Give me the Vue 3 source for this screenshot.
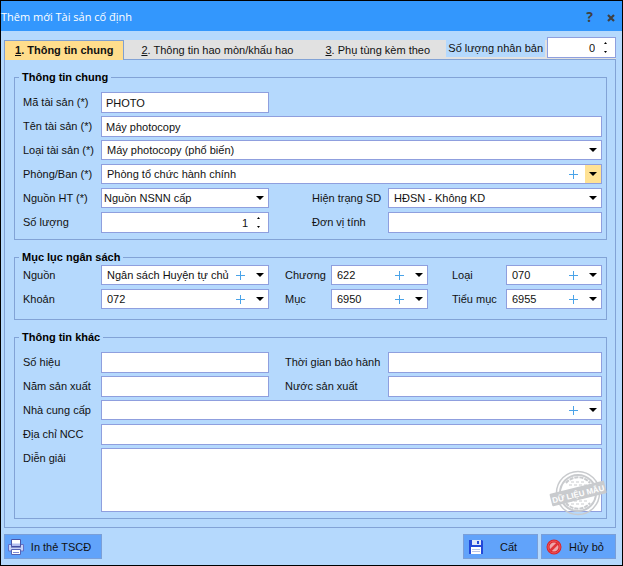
<template>
  <main class="window">
    <header class="titlebar">
      <h1>Thêm mới Tài sản cố định</h1>
      <button type="button" class="title-btn" aria-label="Trợ giúp">?</button>
      <button type="button" class="title-btn" aria-label="Đóng">
        <svg width="8" height="8" viewBox="0 0 8 8"><path d="M1 1L7 7M7 1L1 7" stroke="#404040" stroke-width="2.2" /></svg>
      </button>
    </header>

    <form class="body" @submit.prevent>
      <div class="tabbar">
        <button v-for="(tab, i) in tabs" :key="tab" type="button"
                class="tab" :class="{ active: i === activeTab }"
                @click="activeTab = i"><u>{{ i + 1 }}</u>. {{ tab }}</button>
        <label class="copies-label" for="copies">Số lượng nhân bản</label>
        <div class="box spin copies">
          <input id="copies" v-model="form.copies" type="number">
          <svg class="spin-arrows" width="18" height="13" viewBox="0 0 18 13"><path d="M7 3h3l-1.5-2zM7 10h3l-1.5 2z" /></svg>
        </div>
      </div>

      <div class="pane">
        <fieldset>
          <legend>Thông tin chung</legend>
          <div class="grid">
            <label for="code">Mã tài sản (*)</label>
            <input id="code" v-model="form.code" class="box" type="text">

            <label class="first" for="name">Tên tài sản (*)</label>
            <input id="name" v-model="form.name" class="box wide" type="text">

            <label for="type">Loại tài sản (*)</label>
            <div class="box combo wide">
              <select id="type"><option>Máy photocopy (phổ biến)</option></select>
              <span class="arrow"></span>
            </div>

            <label for="dept">Phòng/Ban (*)</label>
            <div class="box combo wide">
              <select id="dept"><option>Phòng tổ chức hành chính</option></select>
              <button type="button" class="plus" aria-label="Thêm"></button>
              <span class="arrow hot"></span>
            </div>

            <label for="source">Nguồn HT (*)</label>
            <div class="box combo plain">
              <select id="source"><option>Nguồn NSNN cấp</option></select>
              <span class="arrow"></span>
            </div>
            <label class="far" for="status">Hiện trạng SD</label>
            <div class="box combo">
              <select id="status"><option>HĐSN - Không KD</option></select>
              <span class="arrow"></span>
            </div>

            <label for="qty">Số lượng</label>
            <div class="box spin">
              <input id="qty" v-model="form.qty" type="number">
              <svg class="spin-arrows" width="18" height="13" viewBox="0 0 18 13"><path d="M7 3h3l-1.5-2zM7 10h3l-1.5 2z" /></svg>
            </div>
            <label class="far" for="unit">Đơn vị tính</label>
            <input id="unit" class="box" type="text">
          </div>
        </fieldset>

        <fieldset class="budget">
          <legend>Mục lục ngân sách</legend>
          <div class="grid six">
            <template v-for="(f, i) in budget" :key="f.id">
              <label :for="f.id" :class="['', 'near', 'mid'][i % 3]">{{ f.label }}</label>
              <div class="box combo">
                <select :id="f.id"><option>{{ f.value }}</option></select>
                <button type="button" class="plus" aria-label="Thêm"></button>
                <span class="arrow"></span>
              </div>
            </template>
          </div>
        </fieldset>

        <fieldset>
          <legend>Thông tin khác</legend>
          <div class="grid">
            <label for="serial">Số hiệu</label>
            <input id="serial" class="box" type="text">
            <label class="near" for="warranty">Thời gian bảo hành</label>
            <input id="warranty" class="box" type="text">

            <label for="year">Năm sản xuất</label>
            <input id="year" class="box" type="text">
            <label class="near" for="country">Nước sản xuất</label>
            <input id="country" class="box" type="text">

            <label for="vendor">Nhà cung cấp</label>
            <div class="box combo wide">
              <select id="vendor"><option></option></select>
              <button type="button" class="plus" aria-label="Thêm"></button>
              <span class="arrow"></span>
            </div>

            <label for="address">Địa chỉ NCC</label>
            <input id="address" class="box wide" type="text">

            <label for="note">Diễn giải</label>
            <div class="note wide">
              <textarea id="note" class="box"></textarea>
              <svg class="stamp" width="58" height="46" viewBox="0 0 58 46">
                <g fill="none" stroke="#c9cbce">
                  <circle cx="29" cy="23" r="21.5" stroke-width="1.5" />
                  <circle cx="29" cy="23" r="18" stroke-width="2" />
                  <path d="M17 13A15.500 15.500 0 0 1 41 13M17 33A15.500 15.500 0 0 0 41 33" stroke-width="2" stroke-dasharray="4 1" />
                  <path d="M20 15h18M22 12h14M20 31h18M22 34h14" stroke-dasharray="3 2" />
                </g>
                <g transform="rotate(-14 29 23)">
                  <rect x="1" y="17" width="56" height="13" rx="1" fill="#c9cbce" />
                  <text x="29" y="27" text-anchor="middle" font-size="8" font-weight="bold" fill="#fff">DỮ LIỆU MẪU</text>
                </g>
              </svg>
            </div>
          </div>
        </fieldset>
      </div>

      <footer class="actions">
        <button type="button" class="action print">
          <svg width="16" height="16" viewBox="0 0 16 16">
            <path d="M.5 5.500h15v6.500h-15z" fill="#c9d3f6" stroke="#6270c6" />
            <path d="M3.500 7.500V.5h9v7z" fill="#fff" stroke="#4a55a8" />
            <path d="M4 4.500h8V7H4z" fill="#b4c0f0" />
            <path d="M3 8h10" stroke="#3d4899" />
            <path d="M3.500 10.500h9v5h-9z" fill="#fff" stroke="#5562b4" />
            <path d="M5 13.500h6" stroke="#7d8ad4" />
          </svg>
          <span>In thẻ TSCĐ</span>
        </button>
        <button type="submit" class="action save">
          <svg width="16" height="16" viewBox="0 0 16 16">
            <path d="M1 1h13l1 1v13H1z" fill="#2348d8" />
            <path d="M4 1h9v5H4z" fill="#dfe6f8" />
            <path d="M9 2h2v3H9z" fill="#2348d8" />
            <path d="M3 8h10v7H3z" fill="#fff" />
            <path d="M4 10.500h8M4 12.500h8" stroke="#b8c4e8" />
          </svg>
          <span>Cất</span>
        </button>
        <button type="button" class="action">
          <svg width="16" height="16" viewBox="0 0 16 16">
            <circle cx="8" cy="8" r="6" fill="#efa5a8" stroke="#d9252b" stroke-width="3" />
            <circle cx="8" cy="8" r="6" fill="none" stroke="#f0585c" stroke-width="1" />
            <path d="M4 12L12 4" stroke="#e0343a" stroke-width="2.5" />
          </svg>
          <span>Hủy bỏ</span>
        </button>
      </footer>
    </form>
  </main>
</template>

<script setup>
import { ref, reactive } from 'vue'

const tabs = ['Thông tin chung', 'Thông tin hao mòn/khấu hao', 'Phụ tùng kèm theo']
const activeTab = ref(0)

const form = reactive({
  copies: 0,
  code: 'PHOTO',
  name: 'Máy photocopy',
  qty: 1
})

const budget = [
  { id: 'nguon', label: 'Nguồn', value: 'Ngân sách Huyện tự chủ' },
  { id: 'chuong', label: 'Chương', value: '622' },
  { id: 'loai', label: 'Loại', value: '070' },
  { id: 'khoan', label: 'Khoản', value: '072' },
  { id: 'muc', label: 'Mục', value: '6950' },
  { id: 'tieumuc', label: 'Tiểu mục', value: '6955' }
]
</script>

<style>
body {
  margin: 0;
}
</style>

<style scoped>
* {
  box-sizing: border-box;
}

.window {
  border: 1px solid #000;
  background: #b5d9fd;
  color: #111;
  font-family: "Liberation Sans", Arial, sans-serif;
  font-size: 11px;
}

button, input, select, textarea {
  font: inherit;
  color: inherit;
  margin: 0;
  padding: 0;
  border: 0;
  background: none;
  outline: none;
  border-radius: 0;
}

.titlebar {
  display: flex;
  align-items: center;
  height: 30px;
  padding-right: 1px;
  background: #3397fd;
}

.titlebar h1 {
  flex: 1;
  margin: 0;
  color: #fff;
  font: 11px "Open Sans", "Noto Sans", sans-serif;
}

.title-btn {
  width: 21px;
  color: #404040;
  font: bold 14px "Open Sans", sans-serif;
}

.body {
  padding: 6px 6px 6px 3px;
}

/* Tabs */
.tabbar {
  display: flex;
  align-items: flex-end;
  height: 23px;
  background: linear-gradient(#b5d9fd 3px, #e1e1e1 3px);
  box-shadow: inset 0 -1px #82a3d6;
}

.tab {
  height: 20px;
  padding: 0 15px 1px 17px;
  white-space: nowrap;
}

.tab.active {
  padding: 0 10px 1px;
  border: 1px solid #7f9fd2;
  border-bottom: 0;
  background: #ffdd8c;
  font-weight: bold;
}

.copies-label {
  margin: 0 2px 3px auto;
  padding: 0 2px;
  line-height: 17px;
  background: #b5d9fd;
  white-space: nowrap;
}

.copies {
  flex: 0 0 69px;
  margin-bottom: 2px;
}

/* Pane and groups */
.pane {
  display: flex;
  flex-direction: column;
  gap: 11px;
  padding: 11px 8px 8px 9px;
  border: 1px solid #82a3d6;
  border-top: 0;
}

fieldset {
  min-width: 0;
  margin: 0;
  padding: 8px 4px 6px 8px;
  border: 1px solid #82a3d6;
}

fieldset.budget {
  padding-top: 1px;
  padding-bottom: 9px;
}

legend {
  margin-left: -4px;
  padding: 0 3px;
  line-height: 13px;
  font-weight: bold;
  color: #000;
}

.grid {
  display: grid;
  grid-template-columns: 78px 168fr 119px 214fr;
  row-gap: 3px;
  align-items: start;
}

.grid.six {
  grid-template-columns: 78px 168fr 62px 97fr 78px 96fr;
}

.grid label {
  line-height: 21px;
  white-space: nowrap;
}

.grid .first {
  grid-column: 1;
}

.near {
  padding-left: 16px;
}

.mid {
  padding-left: 24px;
}

.far {
  padding-left: 43px;
}

.wide {
  grid-column: 2 / -1;
}

/* Fields */
.box {
  width: 100%;
  min-width: 0;
  height: 21px;
  border: 1px solid #8f9fde;
  background: #fff;
}

input.box {
  padding: 0 4px;
}

.combo {
  display: flex;
  align-items: stretch;
  height: 20px;
}

.combo select {
  flex: 1;
  min-width: 0;
  padding-left: 5px;
  appearance: none;
}

.combo.plain select {
  padding-left: 2px;
}

.arrow {
  display: grid;
  place-items: center;
  width: 16px;
}

.arrow::before {
  content: "";
  border: 4px solid transparent;
  border-top-color: #000;
  border-bottom: 0;
}

.arrow.hot {
  background: #ffe294;
}

.plus {
  width: 16px;
  margin-right: 4px;
  background:
    linear-gradient(#4aa3e8, #4aa3e8) center / 9px 1px no-repeat,
    linear-gradient(#4aa3e8, #4aa3e8) center / 1px 9px no-repeat;
}

.spin {
  display: flex;
  align-items: center;
}

.spin input {
  flex: 1;
  min-width: 0;
  padding-right: 2px;
  text-align: right;
  appearance: textfield;
}

.spin input::-webkit-inner-spin-button {
  display: none;
}

.note {
  position: relative;
  display: flex;
}

.note textarea {
  height: 64px;
  resize: none;
}

.stamp {
  position: absolute;
  right: -5px;
  bottom: -4px;
  pointer-events: none;
}

/* Footer */
.actions {
  display: flex;
  gap: 3px;
  margin-top: 6px;
}

.action {
  display: flex;
  align-items: center;
  width: 75px;
  height: 25px;
  padding: 0 4px;
  border: 1px solid #7a9fd8;
  background: #61a3fa;
}

.action span {
  flex: 1;
  text-align: center;
}

.print {
  width: 98px;
  margin-right: auto;
  padding: 0 3px;
}
</style>
